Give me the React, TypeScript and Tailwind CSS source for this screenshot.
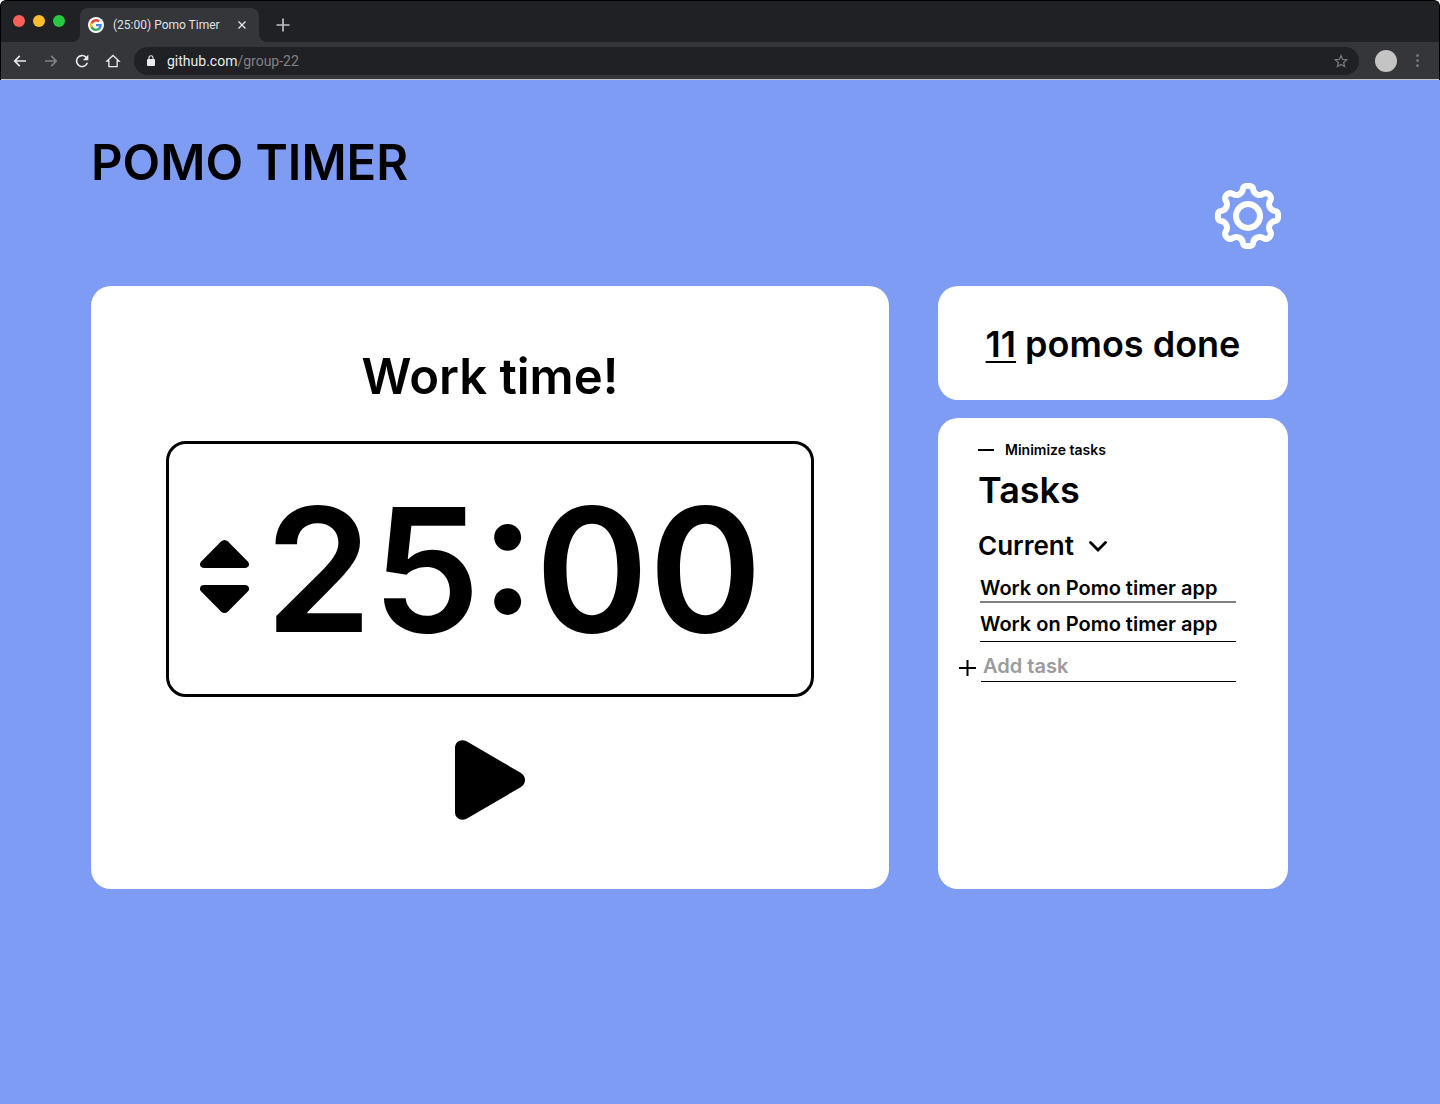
import { useState } from "react";

function GoogleMark() {
  return (
    <svg viewBox="0 0 24 24" className="size-3" aria-hidden="true">
      <path fill="#4285F4" d="M23.5 12.3c0-.8-.1-1.6-.2-2.3H12v4.5h6.5a5.500 5.500 0 0 1-2.400 3.600v3h3.900c2.200-2.100 3.500-5.200 3.500-8.800z" />
      <path fill="#34A853" d="M12 24c3.200 0 6-1.100 8-2.900l-3.900-3c-1.100.7-2.500 1.200-4.100 1.200-3.100 0-5.800-2.100-6.700-5h-4v3.100A12 12 0 0 0 12 24z" />
      <path fill="#FBBC05" d="M5.300 14.300a7.200 7.200 0 0 1 0-4.600V6.600h-4a12 12 0 0 0 0 10.800z" />
      <path fill="#EA4335" d="M12 4.800c1.800 0 3.300.6 4.600 1.800L20 3.200A12 12 0 0 0 1.300 6.600l4 3.100c.9-2.900 3.600-4.900 6.700-4.900z" />
    </svg>
  );
}

function BrowserBar() {
  return (
    <div className="bg-white font-[Roboto,sans-serif] font-normal">
      <div className="overflow-hidden rounded-t-md border-x border-t border-black bg-[#202124]">
        <div className="flex h-[41px] items-end">
          <div className="flex h-10 w-[79px] shrink-0 items-center gap-2 self-start pl-3">
            <span className="size-3 rounded-full bg-[#ff5f57]" />
            <span className="size-3 rounded-full bg-[#febc2e]" />
            <span className="size-3 rounded-full bg-[#28c840]" />
          </div>
          <div className="relative flex h-[34px] w-[179px] shrink-0 items-center rounded-t-lg bg-[#35363a] pl-2 pr-3">
            <svg viewBox="0 0 8 8" className="absolute bottom-0 -left-2 size-2" aria-hidden="true">
              <path d="M8 0v8H0a8 8 0 0 0 8-8z" fill="#35363a" />
            </svg>
            <svg viewBox="0 0 8 8" className="absolute bottom-0 -right-2 size-2" aria-hidden="true">
              <path d="M0 0v8h8a8 8 0 0 1-8-8z" fill="#35363a" />
            </svg>
            <span className="flex size-4 items-center justify-center rounded-full bg-white">
              <GoogleMark />
            </span>
            <span className="ml-[9px] flex-1 whitespace-nowrap text-xs text-[#dfe1e5]">(25:00) Pomo Timer</span>
            <button type="button" aria-label="Close tab" className="flex size-[10px] items-center justify-center">
              <svg viewBox="0 0 8 8" className="size-2" aria-hidden="true">
                <path d="M0.500 0.500l7 7M7.500 0.500l-7 7" stroke="#e8eaed" strokeWidth="1.300" />
              </svg>
            </button>
          </div>
          <button type="button" aria-label="New tab" className="ml-[17px] flex h-[34px] items-center">
            <svg viewBox="0 0 14 14" className="size-[14px]" aria-hidden="true">
              <path d="M7 0.500v13M0.500 7h13" stroke="#bdc1c6" strokeWidth="1.700" />
            </svg>
          </button>
        </div>
        <div className="flex h-[38px] items-center border-b border-[#c4c5c8] bg-[#35363a]">
          <div className="flex w-[133px] shrink-0 items-center gap-[15px] pl-[11px]">
            <button type="button" aria-label="Back">
              <svg viewBox="0 0 24 24" className="size-4" fill="#e8eaed" aria-hidden="true">
                <path d="M21 10.800H6.900l5.500-5.500L10.800 3.500 2.300 12l8.500 8.500 1.600-1.800-5.500-5.500H21z" />
              </svg>
            </button>
            <button type="button" aria-label="Forward">
              <svg viewBox="0 0 24 24" className="size-4" fill="#808286" aria-hidden="true">
                <path d="M3 10.800h14.100l-5.500-5.500 1.600-1.800 8.500 8.500-8.500 8.500-1.600-1.800 5.500-5.500H3z" />
              </svg>
            </button>
            <button type="button" aria-label="Reload">
              <svg viewBox="0 0 24 24" className="size-4" fill="#e8eaed" aria-hidden="true">
                <path d="M18.700 5.300A9.400 9.400 0 1 0 21.200 14.500h-2.500A7 7 0 1 1 17 7l-3.800 3.800H21.500V2.500z" />
              </svg>
            </button>
            <button type="button" aria-label="Home">
              <svg viewBox="0 0 24 24" className="size-4" fill="none" stroke="#e8eaed" strokeWidth="2" aria-hidden="true">
                <path d="M3 12l9-8.300L21 12h-2.800v8.500H5.800V12z" />
              </svg>
            </button>
          </div>
          <div className="flex h-7 flex-1 items-center rounded-full bg-[#202124] pl-[13px] pr-[11px]">
            <svg viewBox="0 0 8 11" className="h-[11px] w-2" aria-hidden="true">
              <rect y="4" width="8" height="7" rx="1" fill="#e8eaed" />
              <path d="M2 4.500V2.700a2 2 0 0 1 4 0V4.500" fill="none" stroke="#e8eaed" strokeWidth="1.100" />
            </svg>
            <a href="#group-22" className="ml-3 flex-1 whitespace-nowrap text-sm text-[#e8eaed]">
              github.com<span className="text-[#808286]">/group-22</span>
            </a>
            <button type="button" aria-label="Bookmark this page">
              <svg viewBox="0 0 24 24" className="size-[14px]" fill="none" stroke="#77797c" strokeWidth="2" aria-hidden="true">
                <path d="M12 2.500l2.800 6.700 7.200.6-5.500 4.700 1.700 7L12 17.800l-6.200 3.700 1.700-7L2 9.800l7.200-.6z" />
              </svg>
            </button>
          </div>
          <button type="button" aria-label="Profile" className="ml-4 size-[22px] rounded-full bg-[#c4c4c4]" />
          <button type="button" aria-label="Browser menu" className="mr-5 ml-[19px] flex flex-col gap-[2px]">
            <span className="size-[3px] rounded-full bg-[#727376]" />
            <span className="size-[3px] rounded-full bg-[#727376]" />
            <span className="size-[3px] rounded-full bg-[#727376]" />
          </button>
        </div>
      </div>
    </div>
  );
}

function Gear() {
  return (
    <svg viewBox="-12 -12 24 24" className="size-[72px]" fill="none" stroke="white" strokeWidth="2" aria-hidden="true">
      <circle r="4" />
      <path d="M-.7-10H.7A1 1 0 0 1 1.700-9A2.200 2.200 0 0 0 5.200-7.450A1.700 1.700 0 0 1 7.450-5.200A2.200 2.200 0 0 0 9-1.700A1 1 0 0 1 10-.7V.7A1 1 0 0 1 9 1.700A2.200 2.200 0 0 0 7.450 5.200A1.700 1.700 0 0 1 5.200 7.450A2.200 2.200 0 0 0 1.700 9A1 1 0 0 1 .7 10H-.7A1 1 0 0 1-1.700 9A2.200 2.200 0 0 0-5.200 7.450A1.700 1.700 0 0 1-7.450 5.200A2.200 2.200 0 0 0-9 1.700A1 1 0 0 1-10 .7V-.7A1 1 0 0 1-9-1.700A2.200 2.200 0 0 0-7.450-5.200A1.700 1.700 0 0 1-5.200-7.450A2.200 2.200 0 0 0-1.700-9A1 1 0 0 1-.7-10Z" />
    </svg>
  );
}

function StepArrow({ down = false }: { down?: boolean }) {
  return (
    <svg viewBox="0 0 49 28" className={down ? "h-7 w-[49px] rotate-180" : "h-7 w-[49px]"} aria-hidden="true">
      <path d="M21 1.500Q24.500-1.500 28 1.500L47.800 21.500C50.500 24.500 48.500 28 45 28H4C.5 28-1.500 24.500 1.200 21.500Z" />
    </svg>
  );
}

const tasks = [
  { id: 1, text: "Work on Pomo timer app", line: "border-b-2 border-[#808080] pb-px" },
  { id: 2, text: "Work on Pomo timer app", line: "mt-[9px] border-b border-black pb-[5px]" },
];

export default function App() {
  const [minutes, setMinutes] = useState(25);
  return (
    <div className="flex min-h-screen flex-col bg-[#7f9cf5] font-[Inter,sans-serif] font-semibold text-black">
      <BrowserBar />
      <main className="pt-[53px] pr-[152px] pb-16 pl-[91px]">
        <header className="flex items-start justify-between">
          <h1 className="text-[49px] leading-[60px]">POMO TIMER</h1>
          <button type="button" aria-label="Settings" className="mt-[47px] mr-1">
            <Gear />
          </button>
        </header>

        <div className="mt-[34px] flex gap-[49px]">
          <section className="flex flex-1 flex-col items-center rounded-[20px] bg-white px-[75px] pt-[61px] pb-[69px]">
            <h2 className="text-[49px] leading-[60px]">Work time!</h2>
            <div className="mt-[34px] flex h-64 w-full items-center rounded-[20px] border-[3px] border-black pl-[31px]">
              <div className="mt-[15px] flex flex-col gap-[17px]">
                <button type="button" aria-label="Increase minutes" onClick={() => setMinutes(minutes + 1)}>
                  <StepArrow />
                </button>
                <button type="button" aria-label="Decrease minutes" onClick={() => setMinutes(Math.max(1, minutes - 1))}>
                  <StepArrow down />
                </button>
              </div>
              <time className="ml-4 text-[172px] leading-none">{minutes}:00</time>
            </div>
            <button type="button" aria-label="Start timer" className="mt-[43px]">
              <svg viewBox="0 0 70 80" className="h-20 w-[70px]" aria-hidden="true">
                <path d="M0 8C0 1.500 6 -1.500 12 1.500L66 33Q70 36 70 40T66 47L12 78.500C6 81.500 0 78.500 0 72Z" />
              </svg>
            </button>
          </section>

          <div className="flex w-[350px] shrink-0 flex-col gap-[18px]">
            <section className="flex h-[114px] items-center justify-center rounded-[20px] bg-white pt-[2px]">
              <p className="text-[36px] leading-[48px]">
                <span className="underline decoration-2 underline-offset-4">11</span> pomos done
              </p>
            </section>

            <section className="flex-1 rounded-[20px] bg-white pt-[22px] pr-[52px] pl-10">
              <button type="button" className="flex items-center gap-[11px] text-sm leading-5">
                <span className="h-[2px] w-4 bg-black" />
                Minimize tasks
              </button>
              <h2 className="mt-1.5 text-[36px] leading-[48px]">Tasks</h2>
              <div className="relative mt-3.5 flex w-[129px] items-center">
                <select
                  aria-label="Task list"
                  className="h-9 w-full appearance-none bg-transparent pr-6 text-[26px] leading-9 outline-none"
                >
                  <option>Current</option>
                </select>
                <svg viewBox="0 0 18 11" className="pointer-events-none absolute right-0 h-[11px] w-[18px]" aria-hidden="true">
                  <path d="M1.500 1.500L9 9l7.500-7.500" fill="none" stroke="black" strokeWidth="2.800" strokeLinecap="round" />
                </svg>
              </div>
              <ul className="mt-3 ml-[2px] text-xl leading-6">
                {tasks.map((task) => (
                  <li key={task.id} className={task.line}>
                    {task.text}
                  </li>
                ))}
              </ul>
              <form className="mt-3 -ml-[19px] flex items-center" onSubmit={(e) => e.preventDefault()}>
                <button type="submit" aria-label="Add task" className="mr-[5px]">
                  <svg viewBox="0 0 17 16" className="h-4 w-[17px]" aria-hidden="true">
                    <path d="M8.500 0v16M0 8h17" stroke="black" strokeWidth="2" />
                  </svg>
                </button>
                <input
                  type="text"
                  aria-label="New task"
                  placeholder="Add task"
                  className="h-7 min-w-0 flex-1 border-b border-black pb-[3px] pl-[2px] text-xl leading-6 outline-none placeholder:text-[#9b9b9b]"
                />
              </form>
            </section>
          </div>
        </div>
      </main>
    </div>
  );
}
